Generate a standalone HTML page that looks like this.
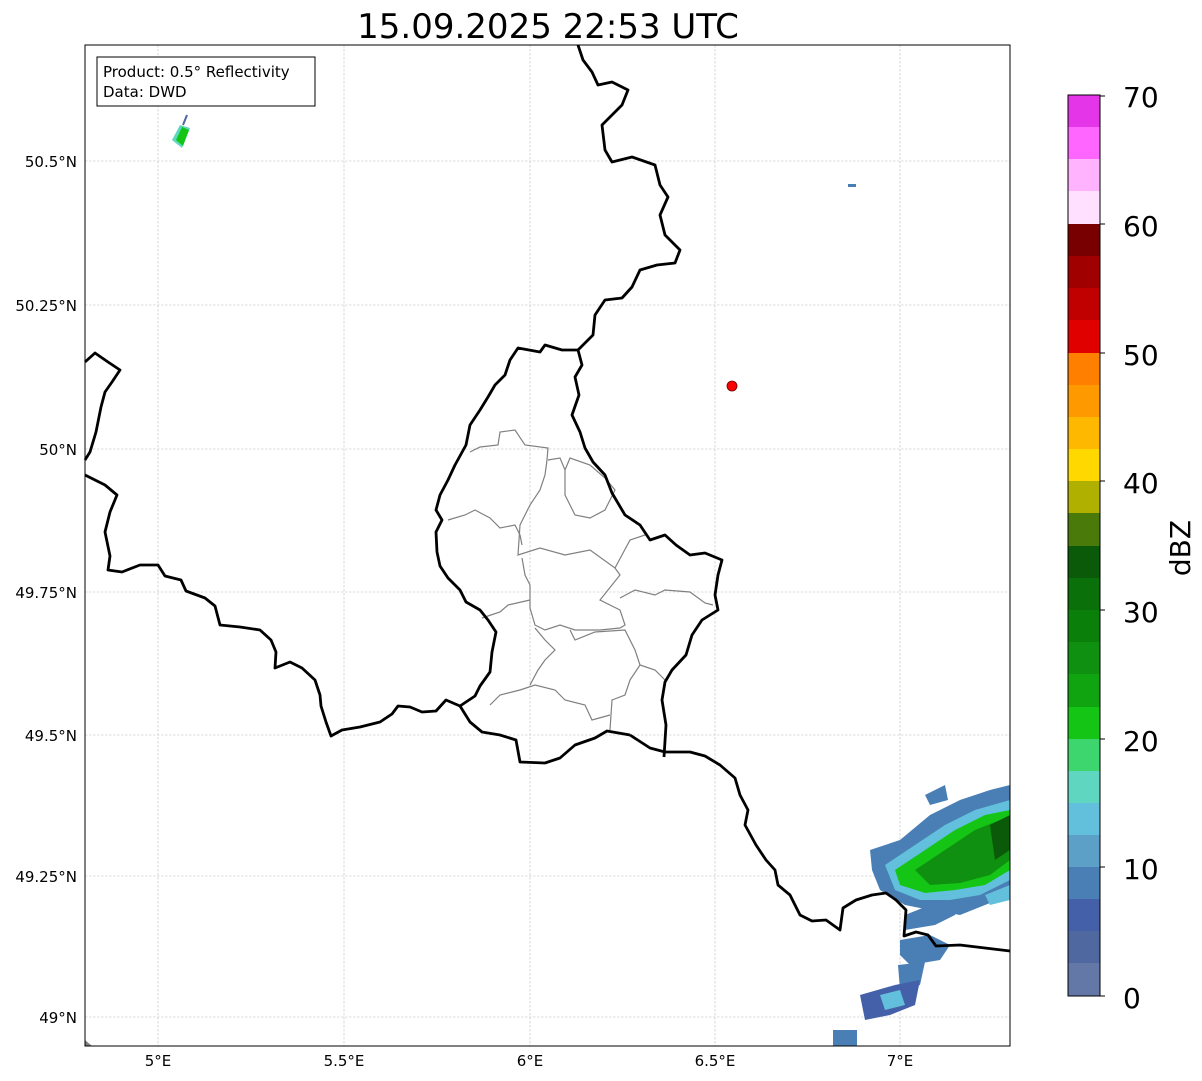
<!DOCTYPE html>
<html><head><meta charset="utf-8"><style>
html,body{margin:0;padding:0;background:#fff;}
svg{display:block;font-family:"DejaVu Sans",sans-serif;}
</style></head><body>
<svg width="1202" height="1081" viewBox="0 0 1202 1081" xmlns="http://www.w3.org/2000/svg">
<rect width="1202" height="1081" fill="#fff"/>
<text x="548" y="38" font-size="34" text-anchor="middle" fill="#000">15.09.2025 22:53 UTC</text>
<!-- grid -->
<g stroke="#bdbdbd" stroke-width="0.6" stroke-dasharray="2.5,1.5">
<line x1="158" y1="45" x2="158" y2="1046"/><line x1="344" y1="45" x2="344" y2="1046"/>
<line x1="530" y1="45" x2="530" y2="1046"/><line x1="715" y1="45" x2="715" y2="1046"/>
<line x1="900" y1="45" x2="900" y2="1046"/>
<line x1="85" y1="161" x2="1010" y2="161"/><line x1="85" y1="305" x2="1010" y2="305"/>
<line x1="85" y1="449" x2="1010" y2="449"/><line x1="85" y1="592" x2="1010" y2="592"/>
<line x1="85" y1="735" x2="1010" y2="735"/><line x1="85" y1="876" x2="1010" y2="876"/>
<line x1="85" y1="1017" x2="1010" y2="1017"/>
</g>
<!-- radar -->
<g>
<polygon points="172,140 180,125 190,128 182,148" fill="#5fd6c0"/>
<polygon points="176,140 182,127 189,130 183,146" fill="#15c515"/>
<line x1="183" y1="125" x2="187" y2="115" stroke="#5068a0" stroke-width="2"/>
<rect x="848" y="184" width="8" height="3" fill="#4a7fb5"/>
<polygon points="870,850 900,840 930,815 960,800 990,790 1010,785 1010,895 985,905 960,915 930,910 905,905 880,890 872,870" fill="#4a7fb5"/>
<polygon points="885,865 915,845 945,825 975,810 1010,800 1010,880 980,895 950,900 920,900 895,890" fill="#62c0dc"/>
<polygon points="895,870 925,850 955,830 985,815 1010,810 1010,870 985,885 955,890 925,893 900,885" fill="#15c515"/>
<polygon points="915,870 945,850 975,830 1000,820 1010,818 1010,860 990,875 960,883 930,885" fill="#109010"/>
<polygon points="990,825 1010,815 1010,850 995,860" fill="#0a5a0a"/>
<polygon points="925,795 945,785 948,800 930,805" fill="#4a7fb5"/>
<polygon points="905,915 930,905 955,900 955,915 935,925 905,930" fill="#4a7fb5"/>
<polygon points="900,940 930,935 950,945 940,960 910,965 900,955" fill="#4a7fb5"/>
<polygon points="898,965 925,962 920,985 900,990" fill="#4a7fb5"/>
<polygon points="860,995 895,985 920,980 915,1005 890,1015 865,1020" fill="#4460a8"/>
<polygon points="880,995 900,990 905,1005 885,1010" fill="#62c0dc"/>
<polygon points="985,895 1010,885 1010,900 990,905" fill="#62c0dc"/>
<rect x="833" y="1030" width="24" height="16" fill="#4a7fb5"/>
</g>
<!-- canton borders -->
<g fill="none" stroke="#808080" stroke-width="1.2">
<path d="M470,452 L480,447 L498,445 L500,432 L515,430 L525,445 L548,448 L547,460 L545,475 L540,490 L530,505 L520,525 L518,555 L540,548 L565,555 L590,550 L615,568 L630,540 L645,535"/>
<path d="M548,460 L560,458 L565,470 L570,458 L590,465 L605,478 L615,490 L605,510 L590,518 L575,515 L565,495 L565,470"/>
<path d="M448,520 L465,515 L475,510 L490,518 L500,528 L515,525 L520,535 L522,545"/>
<path d="M522,558 L525,575 L530,585 L530,608 L535,625 L545,630 L560,625 L575,630 L600,630 L620,628 L625,625 L620,610 L600,600 L620,575 L615,568"/>
<path d="M482,618 L500,612 L508,605 L530,600"/>
<path d="M620,598 L635,590 L655,595 L665,590 L690,592 L705,603 L713,605"/>
<path d="M535,628 L545,640 L555,650 L545,660 L538,670 L530,685"/>
<path d="M490,705 L500,695 L520,690 L535,685 L555,690 L565,700 L585,705 L592,720 L610,715"/>
<path d="M570,630 L575,640 L595,632 L625,630 L635,650 L640,665 L655,670 L665,680"/>
<path d="M640,665 L630,680 L625,695 L612,700 L610,730"/>
</g>
<!-- country borders -->
<g fill="none" stroke="#000" stroke-width="2.8" stroke-linejoin="round">
<path d="M578,45 L583,60 L592,72 L598,85 L612,82 L628,90 L622,105 L602,125 L605,150 L612,162 L632,157 L655,165 L660,185 L668,197 L660,215 L665,235 L680,250 L675,263 L657,265 L640,270 L632,287 L622,298 L605,300 L595,315 L593,335 L578,350 L582,365 L575,377 L579,395 L572,415 L580,432 L585,448 L593,462 L605,475 L612,493 L625,515 L640,525 L650,540 L665,535 L676,545 L690,555 L705,553 L722,560 L718,575 L715,595 L718,610 L702,620 L692,635 L686,655 L672,670 L665,682 L662,700 L666,725 L664,757"/>
<path d="M630,735 L650,748 L665,752 L690,752 L705,756 L720,765 L735,778 L740,795 L748,810 L745,825 L756,845 L766,860 L775,870 L778,885 L790,895 L800,915 L812,921 L826,920 L840,930 L843,908 L856,900 L872,895 L886,893 L896,900 L906,910 L904,936 L916,932 L928,935 L936,946 L960,945 L985,948 L1010,951"/>
<path d="M578,350 L562,350 L545,345 L540,352 L518,348 L510,360 L505,375 L495,385 L488,397 L480,410 L470,425 L466,445 L455,465 L448,480 L440,495 L436,510 L442,520 L436,532 L437,552 L440,566 L448,578 L460,590 L466,602 L480,610 L488,620 L496,632 L492,652 L490,672 L480,686 L475,696 L460,706"/>
<path d="M460,706 L470,722 L482,732 L500,735 L516,740 L520,762 L545,763 L560,758 L575,745 L595,738 L607,731 L630,735"/>
<path d="M85,475 L105,485 L117,495 L110,512 L105,532 L110,556 L108,570 L122,572 L140,565 L158,565 L165,576 L181,580 L186,591 L205,598 L215,606 L220,625 L240,627 L260,630 L271,640 L276,652 L275,668 L290,662 L302,668 L315,680 L320,695 L321,706 L326,722 L331,736 L342,730 L360,727 L380,722 L392,714 L398,706 L410,707 L422,712 L436,711 L446,700 L460,706"/>
<path d="M85,362 L95,353 L108,362 L120,370 L112,382 L105,392 L101,407 L96,432 L90,452 L85,460"/>
</g>
<circle cx="732" cy="386" r="5" fill="#f00" stroke="#600" stroke-width="0.8"/>
<polygon points="85,1040 92,1046 85,1046" fill="#808080"/>
<rect x="85" y="45" width="925" height="1001" fill="none" stroke="#000" stroke-width="1"/>
<!-- info box -->
<rect x="97" y="57" width="218" height="49" fill="#fff" stroke="#000" stroke-width="1"/>
<text x="103" y="77" font-size="15">Product: 0.5° Reflectivity</text>
<text x="103" y="97" font-size="15">Data: DWD</text>
<!-- tick labels -->
<g font-size="15" text-anchor="end">
<text x="77" y="167">50.5°N</text><text x="77" y="311">50.25°N</text>
<text x="77" y="455">50°N</text><text x="77" y="598">49.75°N</text>
<text x="77" y="741">49.5°N</text><text x="77" y="882">49.25°N</text>
<text x="77" y="1023">49°N</text>
</g>
<g font-size="15" text-anchor="middle">
<text x="158" y="1066">5°E</text><text x="344" y="1066">5.5°E</text>
<text x="530" y="1066">6°E</text><text x="715" y="1066">6.5°E</text>
<text x="900" y="1066">7°E</text>
</g>
<!-- colorbar -->
<g>
<rect x="1068" y="95" width="32" height="33" fill="#e535e8"/>
<rect x="1068" y="127" width="32" height="33" fill="#ff66ff"/>
<rect x="1068" y="159" width="32" height="33" fill="#ffb3ff"/>
<rect x="1068" y="191" width="32" height="34" fill="#ffe0ff"/>
<rect x="1068" y="224" width="32" height="33" fill="#780000"/>
<rect x="1068" y="256" width="32" height="33" fill="#a00000"/>
<rect x="1068" y="288" width="32" height="33" fill="#c00000"/>
<rect x="1068" y="320" width="32" height="34" fill="#e00000"/>
<rect x="1068" y="353" width="32" height="33" fill="#ff7f00"/>
<rect x="1068" y="385" width="32" height="33" fill="#ff9900"/>
<rect x="1068" y="417" width="32" height="33" fill="#ffb800"/>
<rect x="1068" y="449" width="32" height="33" fill="#ffd800"/>
<rect x="1068" y="481" width="32" height="33" fill="#b0b000"/>
<rect x="1068" y="513" width="32" height="34" fill="#4a7a0a"/>
<rect x="1068" y="546" width="32" height="33" fill="#0a5a0a"/>
<rect x="1068" y="578" width="32" height="33" fill="#0a700a"/>
<rect x="1068" y="610" width="32" height="33" fill="#0a800a"/>
<rect x="1068" y="642" width="32" height="33" fill="#109010"/>
<rect x="1068" y="674" width="32" height="34" fill="#10a510"/>
<rect x="1068" y="707" width="32" height="33" fill="#15c515"/>
<rect x="1068" y="739" width="32" height="33" fill="#3dd56d"/>
<rect x="1068" y="771" width="32" height="33" fill="#5fd6c0"/>
<rect x="1068" y="803" width="32" height="33" fill="#62c0dc"/>
<rect x="1068" y="835" width="32" height="33" fill="#5ca0c8"/>
<rect x="1068" y="867" width="32" height="33" fill="#4a7fb5"/>
<rect x="1068" y="899" width="32" height="33" fill="#4460a8"/>
<rect x="1068" y="931" width="32" height="33" fill="#5068a0"/>
<rect x="1068" y="963" width="32" height="33" fill="#6478a8"/>
<rect x="1068" y="95" width="32" height="901" fill="none" stroke="#000" stroke-width="1"/>
</g>
<g font-size="28">
<text x="1123" y="107">70</text><text x="1123" y="236">60</text>
<text x="1123" y="365">50</text><text x="1123" y="493">40</text>
<text x="1123" y="622">30</text><text x="1123" y="751">20</text>
<text x="1123" y="879">10</text><text x="1123" y="1008">0</text>
</g>
<g stroke="#000" stroke-width="1">
<line x1="1100" y1="96" x2="1105" y2="96"/><line x1="1100" y1="224" x2="1105" y2="224"/>
<line x1="1100" y1="353" x2="1105" y2="353"/><line x1="1100" y1="481" x2="1105" y2="481"/>
<line x1="1100" y1="610" x2="1105" y2="610"/><line x1="1100" y1="739" x2="1105" y2="739"/>
<line x1="1100" y1="867" x2="1105" y2="867"/><line x1="1100" y1="996" x2="1105" y2="996"/>
</g>
<text x="1190" y="548" font-size="28" text-anchor="middle" transform="rotate(-90 1190 548)">dBZ</text>
</svg>
</body></html>
